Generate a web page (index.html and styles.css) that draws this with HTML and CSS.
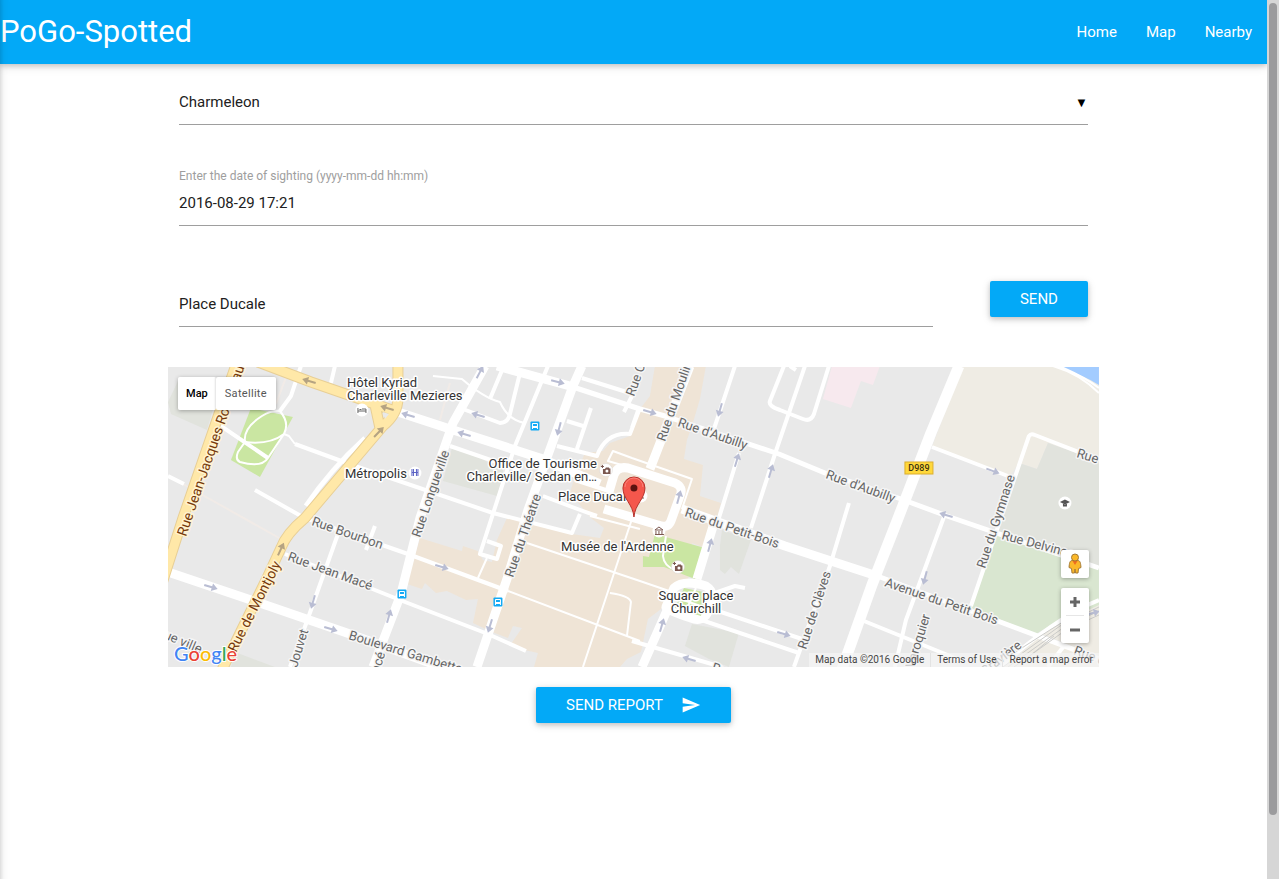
FILE: index.html
```html
<!DOCTYPE html>
<html lang="en">
<head>
<meta charset="utf-8">
<meta name="viewport" content="width=device-width, initial-scale=1">
<title>PoGo-Spotted</title>
<link rel="stylesheet" href="styles.css">
</head>
<body>
<div class="side-nav"></div>
<div class="page">
  <nav class="navbar">
    <a class="brand" href="#">PoGo-Spotted</a>
    <ul class="nav-links">
      <li><a href="#">Home</a></li>
      <li><a href="#">Map</a></li>
      <li><a href="#">Nearby</a></li>
    </ul>
  </nav>

  <main class="container">
    <form class="report">
      <div class="select-field">
        <select class="field" aria-label="Pokemon">
          <option>Charmeleon</option>
        </select>
        <span class="caret" aria-hidden="true">▼</span>
      </div>

      <div class="input-field">
        <label for="date">Enter the date of sighting (yyyy-mm-dd hh:mm)</label>
        <input class="field" id="date" type="text" value="2016-08-29 17:21">
      </div>

      <div class="search-row">
        <input class="field" type="text" aria-label="Location" value="Place Ducale">
        <button class="btn" type="button">SEND</button>
      </div>

      <section class="map" aria-label="Map">
        <svg class="map-canvas" viewBox="168 367 931 300" preserveAspectRatio="xMidYMid slice">
          <defs>
            <path id="arrow" d="M-7-1H1V-4L7 0L1 4V1H-7Z"/>
            <g id="bus"><rect x="-4.500" y="-4.500" width="9" height="9" rx="1" fill="#12a9f4"/><path d="M-3 3V-2Q-3-3-2-3H2Q3-3 3-2V3H2V2H-2V3Z" fill="#fff"/><path d="M-2-2h4v2h-4z" fill="#12a9f4"/></g>
            <g id="camera"><circle r="6.500" fill="#fff" stroke="#d8d4d0" stroke-width=".5"/><path d="M-3-1H-1L0-2.500H3L3.500-1.500H4.500V4H-3Z" fill="#7b5850"/><circle cx="1" cy="1" r="1.500" fill="#fff"/><path d="M-3.500-5v3M-5-3.500h3" stroke="#7b5850"/></g>
          </defs>

          <rect class="land" x="168" y="367" width="931" height="300"/>

          <g class="areas">
            <path class="school" d="M168 402L180 377L218 392L207 430L171 414Z"/>
            <path class="park" d="M251 408L293 417L260 477L231 460Z"/>
            <path class="clinic" d="M832 366H880L873 385L861 381L851 408L823 399Z"/>
            <path class="sand" d="M963 366L932 447L1010 476L1019 463L1037 469L1048 443L1099 461V366Z"/>
            <path class="school" d="M1019 463L1037 469L1048 443L1099 461V570L996 532Z"/>
            <path class="lawn" d="M996 534L1099 569V606L1061 619L1036 634L971 608Z"/>
            <path class="sand" d="M1099 605L1060 624L1042 634L1099 657ZM1099 660L1040 636L1004 667H1099Z"/>
            <path class="water" d="M1054 366Q1082 374 1099 385V366Z"/>
            <path class="town" d="M655 366H706L700 399L692 426L687 440L684 459L703 465L700 496L721 503L717 518L712 528L705 548L692 543L688 582L675 585L665 606L648 619L641 652L627 659L620 667H534L538 653L520 649L511 644L522 628L513 626L508 638L492 632L473 623L478 599L466 600L447 591L436 593L425 583L422 589L407 584L420 538L462 551L463 546L478 551L483 560L492 562L497 540L507 518L572 534L600 538L604 528L591 518L570 493L575 476L585 453L603 451L610 443L630 436L640 409L650 396Z"/>
            <path class="school" d="M452 448L480 458L503 470V477L497 496L443 481Z"/>
            <path class="school" d="M722 530L751 540L739 574L731 567L725 574L720 570L720 546Z"/>
            <path class="school" d="M692 624L739 633L729 667L709 659L685 646Z"/>
            <path class="school" d="M235 652L275 667H231Z"/>
            <path class="park" d="M655 534L705 548L695 579L664 567L643 567V556L649 557Z"/>
          </g>

          <g class="roads thin">
            <path d="M433 376L462 379Q484 398 500 402Q508 420 525 423"/>
            <path d="M632 458L692 479L682 509M632 458L613 451L608 461L632 468"/>
            <path d="M527 543L640 581L675 593M508 591L640 641M633 516L583 667M610 593Q630 596 631 602L627 636M590 516L640 529M487 558L478 578M666 536L663 556Q664 566 675 570"/>
            <path class="lane" d="M183 484L281 539M288 372L276 404M450 383L440 420"/>
            <path d="M1053 366Q1080 374 1099 393M1059 366Q1085 377 1099 388"/>
          </g>
          <g class="roads small">
            <path d="M168 476L184 484M255 490L301 516M221 426L268 458M301 366L291 396L280 411M335 366L331 383"/>
            <path d="M295 444L355 466L493 513L572 533L580 514"/>
            <path d="M548 366L515 446L480 554L497 559L501 546L487 541M503 368L490 399M520 373L510 414Q508 423 500 423L463 409"/>
            <path d="M450 446L520 470M567 421L583 426M591 408L577 449M557 446L597 456Q606 432 630 434L640 408M543 496L583 511L597 516M582 378L633 394L624 412M639 408L632 428"/>
            <path d="M338 534L306 624L290 667M375 526L366 550M849 503L830 566L794 667M735 366L714 429M739 453L719 518M805 366L775 454L751 528"/>
            <path d="M784 366L770 401Q768 406 780 410L803 419Q811 422 814 414L829 366M790 366L796 370"/>
            <path d="M305 518L408 554L508 591M285 554L400 600L488 634L526 651M712 594L735 586L745 588M712 609L802 639M669 609L799 653M632 641L722 667M575 480L612 492"/>
            <path d="M932 447L1008 476M971 606L1029 436Q1031 433 1035 435L1099 460M944 517L906 620L895 667M864 621L960 660M1099 600Q1058 616 1000 667M1064 646L1048 667"/>
          </g>
          <path class="roads loop" d="M280 411Q290 423 284 434Q270 445 245 442Q243 428 262 416Q272 410 280 411M284 434L268 458Q262 468 240 462Q235 460 238 452L245 442M284 434L289 436L295 444"/>
          <g class="roads medium">
            <path d="M570 386L640 409L665 416L779 454L825 473L901 499L947 516L1099 568M872 574L971 611L1099 659"/>
            <path d="M365 438Q330 470 306 506"/>
          </g>
          <g class="roads large">
            <path d="M168 572L248 599L350 634L455 672"/>
            <path d="M398 412L447 428L540 458L600 484M485 366L453 423L420 518L401 594L373 667M582 366L573 386L528 510L507 579L477 667"/>
            <path d="M497 366L570 386M690 366L650 469M682 509L785 546L874 575M715 520L697 579M669 606L642 667"/>
            <path d="M609 492L614 475Q617 466 628 468L675 483Q684 487 680 496L671 521Q668 529 658 525L604 509"/>
            <path d="M674 588Q684 579 706 586Q717 593 709 610Q704 623 691 618Q669 611 666 607Z"/>
          </g>
          <path class="roads trunk" d="M959 366L931 433L899 516L872 585L841 672"/>
          <path class="park" d="M684 588L708 593L701 616L675 608Z"/>
          <path class="roads thin" d="M675 597L706 608M696 588L686 611"/>

          <g class="main-casing">
            <path d="M237 362L183 518L160 590"/>
            <path d="M258 362L311 382L392 410M398 360V398Q398 414 383 426L305 518Q286 534 281 548L268 576L221 672M374 400L380 428"/>
          </g>
          <g class="main-road">
            <path d="M237 362L183 518L160 590"/>
            <path d="M258 362L311 382L392 410M398 360V398Q398 414 383 426L305 518Q286 534 281 548L268 576L221 672M374 400L380 428"/>
          </g>
          <path class="land" d="M383 412L389 414L385 419Z"/>

          <g class="rail"><path d="M1003 667L1060 626L1099 607M1008 667L1063 628L1099 611M1014 667L1066 630L1099 615M1025 660L1054 636M1000 662L1050 630L1076 614"/></g>

          <g class="arrows brown">
            <use href="#arrow" transform="translate(309 381) rotate(196)"/><use href="#arrow" transform="translate(387 408) rotate(196)"/>
            <use href="#arrow" transform="translate(379 432) rotate(-46)"/><use href="#arrow" transform="translate(281 549) rotate(-65)"/>
          </g>
          <g class="arrows">
            <use href="#arrow" transform="translate(480 372) rotate(-62)"/><use href="#arrow" transform="translate(558 382) rotate(14)"/>
            <use href="#arrow" transform="translate(408 415) rotate(197)"/><use href="#arrow" transform="translate(478 415) rotate(197)"/>
            <use href="#arrow" transform="translate(464 434) rotate(197)"/><use href="#arrow" transform="translate(559 429) rotate(105)"/>
            <use href="#arrow" transform="translate(650 412) rotate(17)"/><use href="#arrow" transform="translate(720 410) rotate(106)"/>
            <use href="#arrow" transform="translate(737 460) rotate(-73)"/><use href="#arrow" transform="translate(771 471) rotate(-73)"/>
            <use href="#arrow" transform="translate(679 497) rotate(-75)"/><use href="#arrow" transform="translate(993 471) rotate(20)"/>
            <use href="#arrow" transform="translate(946 515) rotate(197)"/><use href="#arrow" transform="translate(925 578) rotate(105)"/>
            <use href="#arrow" transform="translate(211 587) rotate(17)"/><use href="#arrow" transform="translate(331 629) rotate(17)"/>
            <use href="#arrow" transform="translate(313 602) rotate(106)"/><use href="#arrow" transform="translate(389 616) rotate(-74)"/>
            <use href="#arrow" transform="translate(442 567) rotate(17)"/><use href="#arrow" transform="translate(490 626) rotate(107)"/>
            <use href="#arrow" transform="translate(710 545) rotate(-75)"/><use href="#arrow" transform="translate(662 625) rotate(-74)"/>
            <use href="#arrow" transform="translate(784 634) rotate(17)"/><use href="#arrow" transform="translate(689 659) rotate(197)"/>
            <use href="#arrow" transform="translate(1093 613) rotate(-15)"/>
          </g>

          <g class="street main">
            <text transform="translate(186 537) rotate(-71)">Rue Jean-Jacques Rousseau</text>
            <text transform="translate(236 653) rotate(-63)">Rue de Montjoly</text>
          </g>
          <g class="street">
            <text transform="translate(311 525) rotate(19)">Rue Bourbon</text>
            <text transform="translate(287 560) rotate(20)">Rue Jean Macé</text>
            <text transform="translate(297 668) rotate(-73)">Jouvet</text>
            <text transform="translate(348 639) rotate(17)">Boulevard Gambetta</text>
            <text transform="translate(163 638) rotate(23)">ue ville</text>
            <text transform="translate(376 684) rotate(-73)">Macé</text>
            <text transform="translate(420 538) rotate(-71)">Rue Longueville</text>
            <text transform="translate(513 578) rotate(-71)">Rue du Théatre</text>
            <text transform="translate(634 397) rotate(-70)">Rue Colette</text>
            <text transform="translate(665 442) rotate(-71)">Rue du Moulin</text>
            <text transform="translate(677 426) rotate(19)">Rue d'Aubilly</text>
            <text transform="translate(825 478) rotate(20)">Rue d'Aubilly</text>
            <text transform="translate(684 516) rotate(19)">Rue du Petit-Bois</text>
            <text transform="translate(884 586) rotate(19)">Avenue du Petit Bois</text>
            <text transform="translate(806 650) rotate(-72)">Rue de Clèves</text>
            <text transform="translate(914 669) rotate(-73)">Varoquier</text>
            <text transform="translate(985 569) rotate(-72)">Rue du Gymnase</text>
            <text transform="translate(1076 457) rotate(17)">Rue</text>
            <text transform="translate(1001 539) rotate(15)">Rue Delvincou</text>
            <text transform="translate(985 676) rotate(-38)">Gravière</text>
            <text transform="translate(1073 654) rotate(20)">Rue de</text>
            <text transform="translate(711 671) rotate(18)">Rue</text>
          </g>

          <g class="poi-icons">
            <circle cx="362" cy="410" r="6.500"/><path d="M358 408v5M358 411h8v2M359.500 409.500h2M362 409h4v2" class="ink"/>
            <circle cx="415" cy="473" r="6.500"/><path d="M412 469v7M418 469v7M412 472.500h6M413.500 469v7M416.500 469v7" class="ink violet"/>
            <circle cx="641" cy="496" r="6.500"/><path d="M638 498h6M639 495h4" class="ink umber"/>
            <circle cx="659" cy="531" r="6.500"/><path d="M655 530l4-3 4 3zM656 531v3M659 531v3M662 531v3M655 534.500h9" class="ink umber"/>
            <circle cx="1065" cy="503" r="6.500"/><path d="M1060 502l5-2.500 5 2.500-5 2.500zM1063 504v2.500h4v-2.500z" fill="#555"/>
            <use href="#camera" x="606" y="470"/><use href="#camera" x="678" y="567"/>
            <use href="#bus" x="535" y="426"/><use href="#bus" x="402" y="594"/><use href="#bus" x="498" y="602"/>
          </g>
          <rect class="shield" x="905" y="462" width="28" height="12"/>
          <text class="shield-text" x="919" y="471">D989</text>

          <g class="place">
            <text x="347" y="387">Hôtel Kyriad</text><text x="347" y="400">Charleville Mezieres</text>
            <text x="345" y="478">Métropolis</text>
            <text x="597" y="468" text-anchor="end">Office de Tourisme</text><text x="597" y="481" text-anchor="end">Charleville/ Sedan en…</text>
            <text x="558" y="501">Place Ducale</text>
            <text x="561" y="551">Musée de l'Ardenne</text>
            <text x="696" y="600" text-anchor="middle">Square place</text><text x="696" y="613" text-anchor="middle">Churchill</text>
          </g>

          <g class="pin">
            <path d="M634 517C633 504 623 499 623 488A11 11 0 0 1 645 488C645 499 635 504 634 517Z" fill="#f4574c" stroke="#b5332c"/>
            <path d="M625 487A9 9 0 0 1 643 487" fill="none" stroke="#fb8178"/>
            <circle cx="634" cy="488" r="3.500" fill="#5c1310"/>
          </g>
        </svg>

        <div class="map-type">
          <button type="button" class="active">Map</button>
          <button type="button">Satellite</button>
        </div>

        <a class="google" href="#"><span class="b">G</span><span class="r">o</span><span class="y">o</span><span class="b">g</span><span class="g">l</span><span class="r">e</span></a>

        <div class="map-tools">
          <button type="button" class="pegman" aria-label="Street View">
            <svg viewBox="0 0 16 22" width="16" height="22">
              <path d="M5 7.500C2.500 8 2.500 10 2 14.500L4.500 15.500L5 20H7.500L8 16L8.500 20H11L11.500 15.500L14 14.500C13.500 10 13.500 8 11 7.500Z" fill="#fbb829" stroke="#a47a35"/>
              <path d="M5.500 8L8 12L10.500 8Z" fill="#ee6c20"/>
              <circle cx="8" cy="4.500" r="3.500" fill="#fbb829" stroke="#a47a35"/>
            </svg>
          </button>
          <div class="zoom">
            <button type="button" aria-label="Zoom in"><svg viewBox="0 0 12 12" width="12" height="12"><path d="M6 1V11M1 6H11"/></svg></button>
            <button type="button" aria-label="Zoom out"><svg viewBox="0 0 12 12" width="12" height="12"><path d="M1 6H11"/></svg></button>
          </div>
        </div>

        <div class="attribution">
          <span>Map data ©2016 Google</span>
          <a href="#">Terms of Use</a>
          <a href="#">Report a map error</a>
        </div>
      </section>

      <button class="btn submit" type="button">SEND REPORT
        <svg viewBox="0 0 24 24" width="20" height="20"><path d="M2 21L23 12L2 3V10L17 12L2 14Z" fill="#fff"/></svg>
      </button>
    </form>
  </main>
</div>
<div class="scrollbar"><div class="thumb"></div></div>
</body>
</html>
```

FILE: styles.css
```css
* { box-sizing: border-box; }

body {
  margin: 0;
  display: flex;
  height: 100vh;
  overflow: hidden;
  font: 15px/22px Roboto, sans-serif;
  color: #212121;
  background: #fff;
}

button, input, select { font: inherit; color: inherit; }
a { color: inherit; text-decoration: none; }

.page { flex: 1; min-width: 0; overflow: hidden; }

.side-nav {
  position: fixed;
  z-index: 2;
  top: -8px;
  bottom: -8px;
  left: -240px;
  width: 240px;
  box-shadow: 0 2px 5px rgba(0, 0, 0, .16), 0 2px 10px rgba(0, 0, 0, .12);
}

.scrollbar { width: 12px; padding: 3px 2px; background: #d6d6d6; }
.thumb { width: 8px; height: 93%; border-radius: 4px; background: #9b9b9d; }

.navbar {
  display: flex;
  justify-content: space-between;
  line-height: 64px;
  color: #fff;
  background: #03a9f7;
  box-shadow: 0 2px 5px rgba(0, 0, 0, .16), 0 2px 10px rgba(0, 0, 0, .12);
}
.brand { font-size: 31px; }
.nav-links { display: flex; margin: 0; padding: 0; list-style: none; }
.nav-links a { display: block; padding: 0 15px 0 14px; }

.container { width: 70%; margin: 0 auto; padding-top: 16px; }
.report { margin: 0 -11px; }

.field {
  display: block;
  width: 100%;
  height: 45px;
  padding: 0;
  border: 0;
  border-bottom: 1px solid #9e9e9e;
  border-radius: 0;
  outline: 0;
  appearance: none;
  background: transparent;
}

.select-field { display: grid; align-items: center; }
.select-field > * { grid-area: 1 / 1; }
.caret { justify-self: end; font-size: 13px; color: #000; pointer-events: none; }

.input-field { padding-top: 42px; }
.input-field label { display: block; height: 14px; font-size: 12px; line-height: 18px; color: #9e9e9e; }

.search-row { display: flex; align-items: flex-start; justify-content: space-between; padding-top: 55px; }
.search-row .field { width: 83%; height: 46px; padding-top: 1px; }

.btn {
  height: 36px;
  padding: 0 30px;
  border: 0;
  border-radius: 2px;
  color: #fff;
  background: #03a9f7;
  box-shadow: 0 2px 5px rgba(0, 0, 0, .16), 0 2px 10px rgba(0, 0, 0, .12);
}
.submit { display: flex; align-items: center; gap: 18px; margin: 20px auto 0; }

.map { position: relative; height: 300px; margin: 40px -11px 0; overflow: hidden; }
.map-canvas { display: block; width: 100%; height: 100%; }

.land { fill: #e9e9e9; }
.town { fill: #efe4d6; }
.sand { fill: #efece4; }
.school { fill: #e1e3dd; }
.park { fill: #cae6a2; }
.lawn { fill: #d9e6d0; }
.clinic { fill: #f7e9ee; }
.water { fill: #a3ccff; }

.roads { fill: none; stroke: #fff; stroke-linejoin: round; }
.thin, .loop { stroke-width: 2px; }
.small { stroke-width: 4px; }
.medium { stroke-width: 5px; }
.large { stroke-width: 9px; }
.trunk { stroke-width: 11px; }
.lane { stroke: #f1ebe7; }
.main-casing { fill: none; stroke: #e8cf96; stroke-width: 11px; }
.main-road { fill: none; stroke: #ffe8a8; stroke-width: 9px; }
.rail { fill: none; stroke: #cbcbc9; stroke-width: 1px; }
.arrows { fill: #b9bdd3; }
.brown { fill: #b5a382; }

.street, .place { font-size: 13px; stroke-linejoin: round; paint-order: stroke; }
.street { fill: #666; stroke: #f5f5f5; stroke-width: 3px; }
.main { font-size: 14px; fill: #76390b; stroke: #fff3cf; }
.place { fill: #333; stroke: #fff; stroke-width: 3px; }

.poi-icons circle { fill: #fff; }
.poi-icons use circle { fill: inherit; }
.ink { fill: none; stroke: #666; stroke-width: 1px; }
.violet { stroke: #5b62c4; }
.umber { stroke: #7b5850; }
.shield { fill: #ffd83b; stroke: #dcae2c; }
.shield-text { font-size: 9px; font-weight: 500; text-anchor: middle; fill: #3b3210; }

.map-type {
  position: absolute;
  top: 10px;
  left: 10px;
  display: flex;
  box-shadow: 0 1px 4px rgba(0, 0, 0, .3);
  border-radius: 2px;
}
.map-type button {
  padding: 8px 9px;
  border: 0;
  border-radius: 2px;
  background: #fff;
  font-size: 11px;
  line-height: 17px;
  color: #565656;
  letter-spacing: .3px;
}
.map-type .active { padding: 8px; color: #000; font-weight: 500; letter-spacing: 0; }
.map-type button + button { box-shadow: -1px 0 2px rgba(0, 0, 0, .12); }

.google {
  position: absolute;
  left: 6px;
  bottom: 1px;
  font: 500 20px/26px Lato, sans-serif;
  -webkit-text-stroke: 2px #fff;
  paint-order: stroke;
}
.b { color: #4285f4; }
.r { color: #ea4335; }
.y { color: #fbbc05; }
.g { color: #34a853; }

.map-tools { position: absolute; right: 10px; bottom: 24px; display: grid; gap: 10px; }
.pegman, .zoom { width: 28px; border-radius: 2px; background: #fff; box-shadow: 0 1px 4px rgba(0, 0, 0, .3); }
.pegman { height: 28px; }
.pegman, .zoom button { display: grid; place-items: center; padding: 0; border: 0; }
.zoom { padding: 0 5px; }
.zoom button { width: 18px; height: 27px; background: none; }
.zoom button + button { height: 28px; border-top: 1px solid #e6e6e6; }
.zoom path { stroke: #666; stroke-width: 3px; }

.attribution {
  position: absolute;
  right: 0;
  bottom: 0;
  display: flex;
  font-size: 10px;
  line-height: 14px;
  color: #444;
  background: rgba(245, 245, 245, .7);
}
.attribution > * { padding: 0 6px; }
.attribution > * + * { border-left: 1px solid #e3e3e3; }
```
